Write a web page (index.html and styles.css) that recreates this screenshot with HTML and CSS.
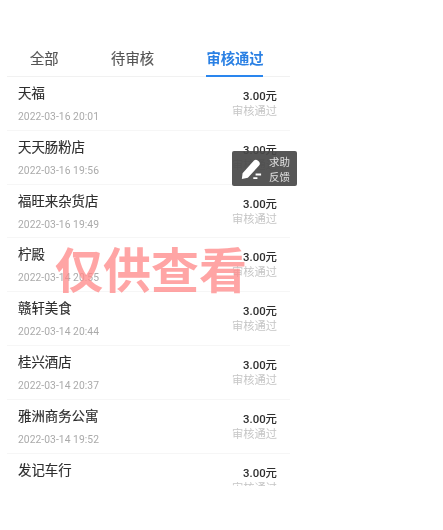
FILE: index.html
```html
<!DOCTYPE html>
<html lang="zh">
<head>
<meta charset="utf-8">
<title>审核列表</title>
<link rel="stylesheet" href="styles.css">
</head>
<body>
<main class="screen">
  <nav class="tabs">
    <div class="tab tab-all">全部</div>
    <div class="tab tab-wait">待审核</div>
    <div class="tab tab-pass">审核通过</div>
  </nav>
  <section class="list">
    <article class="row"><div class="left"><div class="name">天福</div><div class="time">2022-03-16 20:01</div></div><div class="right"><div class="amount">3.00元</div><div class="status">审核通过</div></div></article>
    <article class="row"><div class="left"><div class="name">天天肠粉店</div><div class="time">2022-03-16 19:56</div></div><div class="right"><div class="amount">3.00元</div><div class="status">审核通过</div></div></article>
    <article class="row"><div class="left"><div class="name">福旺来杂货店</div><div class="time">2022-03-16 19:49</div></div><div class="right"><div class="amount">3.00元</div><div class="status">审核通过</div></div></article>
    <article class="row"><div class="left"><div class="name">柠殿</div><div class="time">2022-03-14 20:55</div></div><div class="right"><div class="amount">3.00元</div><div class="status">审核通过</div></div></article>
    <article class="row"><div class="left"><div class="name">赣轩美食</div><div class="time">2022-03-14 20:44</div></div><div class="right"><div class="amount">3.00元</div><div class="status">审核通过</div></div></article>
    <article class="row"><div class="left"><div class="name">桂兴酒店</div><div class="time">2022-03-14 20:37</div></div><div class="right"><div class="amount">3.00元</div><div class="status">审核通过</div></div></article>
    <article class="row"><div class="left"><div class="name">雅洲商务公寓</div><div class="time">2022-03-14 19:52</div></div><div class="right"><div class="amount">3.00元</div><div class="status">审核通过</div></div></article>
    <article class="row"><div class="left"><div class="name">发记车行</div><div class="time">2022-03-14 19:40</div></div><div class="right"><div class="amount">3.00元</div><div class="status">审核通过</div></div></article>
  </section>
  <aside class="help">
    <svg class="help-icon" viewBox="0 0 24 24" width="22" height="22" aria-hidden="true">
      <path d="M2 23 L2.8 16.5 L15 3 C16.2 1.7 18 1.6 19.3 2.7 L20.6 3.9 C21.9 5.1 22 6.9 20.8 8.2 L8.6 21.6 Z" fill="#fff"/>
      <path d="M14.5 22 H19 M17 18 H23" stroke="#fff" stroke-width="2" fill="none"/>
    </svg>
    <div class="help-text"><span>求助</span><span>反馈</span></div>
  </aside>
  <div class="mark">仅供查看</div>
</main>
</body>
</html>
```
FILE: styles.css
```css
html, body {
  margin: 0;
  padding: 0;
  background: #fff;
}
body {
  width: 443px;
  height: 530px;
  overflow: hidden;
  font-family: "Noto Sans CJK SC", "Roboto", sans-serif;
}
.screen {
  position: relative;
  width: 443px;
  height: 530px;
  padding: 42px 0 0 7px;
  box-sizing: border-box;
  filter: blur(0.55px);
}
.tabs {
  display: flex;
  width: 283px;
  height: 35px;
  box-sizing: border-box;
  border-bottom: 1px solid #f1f1f1;
  border-radius: 6px 6px 0 0;
  font-size: 14.3px;
  line-height: 20px;
  color: #555;
  -webkit-text-stroke: 0.15px #555;
}
.tab {
  padding-top: 6px;
  height: 34px;
  box-sizing: border-box;
}
.tab-all { margin-left: 23px; }
.tab-wait { margin-left: 52.5px; }
.tab-pass {
  margin-left: 52.5px;
  width: 57px;
  height: 35px;
  color: #2a80e4;
  font-weight: 700;
  white-space: nowrap;
  border-bottom: 2px solid #2a86ee;
  -webkit-text-stroke: 0;
}
.list {
  width: 283px;
  height: 409px;
  overflow: hidden;
}
.row {
  display: flex;
  justify-content: space-between;
  height: 53.8px;
  box-sizing: border-box;
  padding: 5px 13px 0 11px;
  border-bottom: 1px solid #f6f6f6;
}
.name {
  font-size: 13.4px;
  line-height: 20px;
  color: #2e2e2e;
  -webkit-text-stroke: 0.15px #2e2e2e;
}
.time {
  margin-top: 8px;
  font-family: "Roboto", sans-serif;
  font-size: 10.3px;
  line-height: 14px;
  letter-spacing: 0.05px;
  color: #aaa;
}
.right {
  text-align: right;
  padding-top: 6px;
}
.amount {
  font-family: "Roboto", "Noto Sans CJK SC", sans-serif;
  font-size: 11.4px;
  font-weight: 500;
  line-height: 16px;
  color: #2e2e2e;
}
.status {
  margin-top: -1px;
  font-size: 11.25px;
  line-height: 14px;
  color: #c6c6c6;
}
.help {
  position: absolute;
  left: 232px;
  top: 151px;
  width: 65px;
  height: 35px;
  display: flex;
  align-items: center;
  gap: 7px;
  box-sizing: border-box;
  padding-left: 8px;
  background: rgba(72, 72, 72, 0.92);
  border-radius: 2px;
}
.help-icon { flex: none; }
.help-text {
  display: flex;
  flex-direction: column;
  font-size: 10.5px;
  line-height: 15px;
  color: #e0e0e0;
}
.mark {
  position: absolute;
  left: 55px;
  top: 233px;
  font-size: 48px;
  line-height: 68px;
  font-weight: 700;
  color: rgba(255, 140, 140, 0.78);
  white-space: nowrap;
}
```
